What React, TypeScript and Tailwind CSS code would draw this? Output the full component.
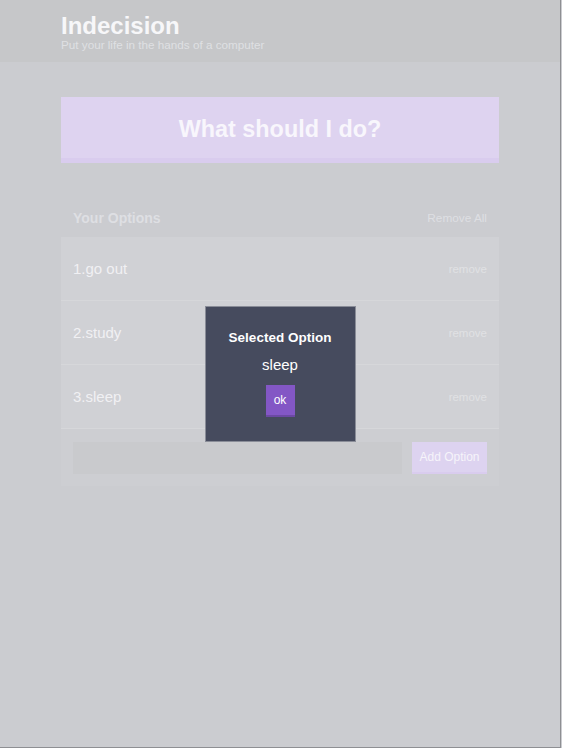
import React from "react";

const options = ["go out", "study", "sleep"];

const Header = () => (
  <header className="bg-[#c6c7c9] h-[62px]">
    <div className="w-[438px] mx-auto pt-[11px]">
      <h1 className="text-[24px] font-bold leading-[29px] text-[#f7f7f9]">Indecision</h1>
      <h2 className="text-[11.7px] leading-[10px] text-[#dfe0e3]">Put your life in the hands of a computer</h2>
    </div>
  </header>
);

const OptionRow = ({ index, text }: { index: number; text: string }) => (
  <div className="flex items-center justify-between h-[64px] px-3 pt-[2px] border-b border-[#d6d7da] bg-[#d0d1d5]">
    <p className="text-[15px] text-[#f0f0f3]">
      {index}.{text}
    </p>
    <button className="text-[11.5px] text-[#e0e1e4]">remove</button>
  </div>
);

export default function App() {
  return (
    <div className="min-h-[748px] bg-[#cbccd0] font-['Liberation_Sans',Arial,sans-serif]">
      <div className="w-[560px]">
        <Header />
        <main className="w-[438px] mx-auto pt-[35px]">
          <button className="w-full h-[66px] pt-[5px] bg-[#ded3f0] border-b-[5px] border-[#d9ccee] text-[23.4px] font-bold text-[#f8f6fc]">
            What should I do?
          </button>
          <div className="mt-[35px] bg-[#cdced2]">
            <div className="flex items-center justify-between h-[39px] px-3 pt-[2px] bg-[#cbccd0]">
              <h3 className="text-[14px] font-bold text-[#dedfe3]">Your Options</h3>
              <button className="text-[11.8px] text-[#dedfe3]">Remove All</button>
            </div>
            {options.map((o, i) => (
              <OptionRow key={o} index={i + 1} text={o} />
            ))}
            <form className="flex gap-[10px] px-3 pt-[13px] pb-[12px]">
              <input className="flex-1 h-[32px] bg-[#c9cacd] outline-none" />
              <button type="button" className="w-[75px] h-[32px] bg-[#ddd3f0] border-b-[2px] border-[#d9ccee] text-[12px] text-[#f6f4fa]">
                Add Option
              </button>
            </form>
          </div>
        </main>
      </div>

      <div className="fixed top-0 left-0 w-[561px] h-[748px] border-r border-b border-[#8e8f93] flex items-center justify-center">
        <div className="w-[151px] h-[136px] bg-[#464b5e] border border-[#8a8d98] flex flex-col items-center text-white">
          <h3 className="mt-[23px] text-[13.5px] font-bold leading-[16px]">Selected Option</h3>
          <p className="mt-[10px] text-[15px] leading-[18px]">sleep</p>
          <button className="mt-[11px] w-[29px] h-[32px] bg-[#8357c5] border-b-[2px] border-[#6c49a3] text-[12px] text-white">
            ok
          </button>
        </div>
      </div>
    </div>
  );
}
